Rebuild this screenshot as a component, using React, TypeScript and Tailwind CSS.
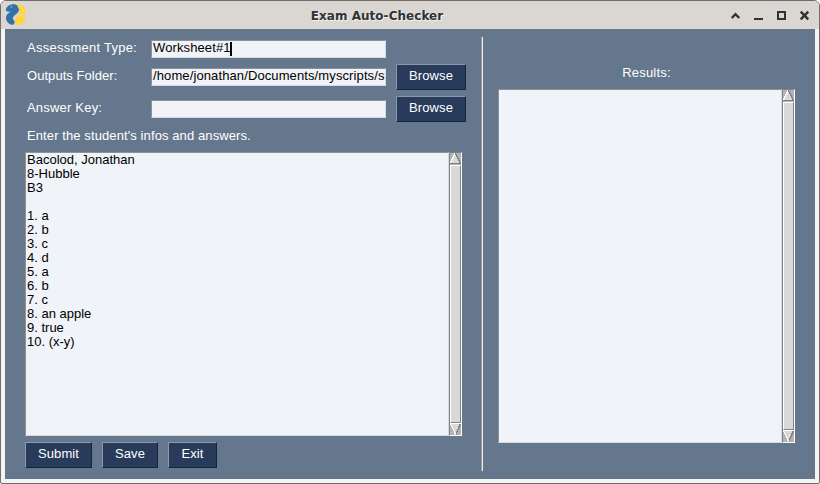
import React from "react";

type WithChildren = { children?: React.ReactNode };

function Label({ children, className = "" }: WithChildren & { className?: string }) {
  return <span className={`block whitespace-pre leading-[15px] text-white ${className}`}>{children}</span>;
}

function Field({ children, className = "" }: WithChildren & { className?: string }) {
  return (
    <div
      className={`flex h-[18px] w-[235px] shrink-0 overflow-hidden whitespace-pre border border-t-[#8f9194] border-l-[#8f9194] border-r-[#d4dbe2] border-b-[#d4dbe2] bg-[#f0f3f7] pl-px leading-[13px] tracking-[0.11px] text-black ${className}`}
    >
      {children}
    </div>
  );
}

function Button({ children, className = "" }: WithChildren & { className?: string }) {
  return (
    <button
      className={`block h-[26px] shrink-0 border border-t-[#8d98ab] border-l-[#8d98ab] border-r-[#17233a] border-b-[#17233a] bg-[#283b5b] pb-[3px] text-center leading-[15px] tracking-[0.1px] text-white ${className}`}
    >
      {children}
    </button>
  );
}

function Arrow({ down = false }: { down?: boolean }) {
  return (
    <svg width="11" height="12" viewBox="0 0 11 12" className="block shrink-0" shapeRendering="crispEdges">
      {down ? (
        <>
          <path d="M0 1H11L5.5 12Z" fill="#d9d9d9" />
          <path d="M10.5 1L5.5 11.5" stroke="#828282" strokeWidth="1.5" />
          <path d="M11 0.5H0M0.5 1L5.5 11.5" stroke="#fff" fill="none" />
        </>
      ) : (
        <>
          <path d="M5.5 0L11 11H0Z" fill="#d9d9d9" />
          <path d="M5.5 0.5L10.5 10.5H0" stroke="#828282" fill="none" />
          <path d="M5 0.5L0.5 10" stroke="#fff" strokeWidth="1.3" fill="none" />
        </>
      )}
    </svg>
  );
}

function ScrollBar() {
  return (
    <div className="flex w-[13px] shrink-0 flex-col border border-t-[#828282] border-l-[#828282] border-r-white border-b-white bg-[#b3b3b3]">
      <Arrow />
      <div className="min-h-0 flex-1 border border-t-white border-l-white border-r-[#828282] border-b-[#828282] bg-[#d9d9d9]" />
      <Arrow down />
    </div>
  );
}

function TextBox({ children, className = "" }: WithChildren & { className?: string }) {
  return (
    <div className={`flex ${className}`}>
      <div className="min-w-0 flex-1 whitespace-pre border border-t-[#8f9194] border-l-[#8f9194] border-r-[#d4dbe2] border-b-[#d4dbe2] bg-[#f0f3f7] pl-px leading-[14px] text-black">
        {children}
      </div>
      <ScrollBar />
    </div>
  );
}

function Logo() {
  return (
    <svg width="22" height="22" viewBox="0 0 22 22" className="shrink-0">
      <path
        d="M6.5 0.6C10 -0.4 14.2 1.6 14.2 5C14.2 9 9.5 10.5 8 13.5C7.3 15.5 9.3 16 9.6 18C9.7 20.5 7 21.5 4.6 20C2 18.4 0.7 16 1 13C1.3 10.3 3.8 9.3 6 7C4.5 7.6 2 8.3 1 6.3C0.4 3.7 3.5 1.4 6.5 0.6Z"
        fill="#3472a6"
      />
      <path
        d="M13.2 0.4C16.8 0.2 20 3 20.7 6C21.2 9 19.6 11.2 17.3 13.2C18.4 14.1 19.6 13.6 20.8 12.8C21.5 16.2 18.4 19.6 15 20.7C11.8 21.6 9.6 20 9.9 17C10.4 13 14.4 11.6 15.2 8.6C15.7 6.5 13.9 5.4 13 3.5C12.5 2 12.5 1 13.2 0.4Z"
        fill="#ffd43b"
      />
      <path d="M15.5 2C18 4 18.8 6.5 17.8 9C16.6 11.6 14 13 12.8 16" stroke="#ffe36b" fill="none" />
      <circle cx="6.5" cy="2.9" r="0.7" fill="#b8d4e8" />
      <circle cx="14" cy="18.4" r="0.6" fill="#fff3b0" />
    </svg>
  );
}

function TitleBar() {
  return (
    <header className="flex h-7 shrink-0 items-start bg-[#dad6d2] pl-[4px] pt-[3px]">
      <Logo />
      <h1 className="w-[698px] pl-[2px] pt-1 text-center font-['DejaVu_Sans'] text-[12px] font-bold leading-4 tracking-[0.04px] text-[#2e3436] [text-shadow:1px_1px_0_#f4f2f0]">
        Exam Auto-Checker
      </h1>
      <svg width="85" height="20" viewBox="0 0 85 20" className="ml-[3px] shrink-0" fill="none" stroke="#2e3436" strokeWidth="2">
        <path d="M3.7 14L7.5 10.2L11.3 14" strokeWidth="2.4" />
        <path d="M26 15H35" />
        <path d="M50 8H57V15H50Z" />
        <path d="M72.7 7.7L80.3 15.3M80.3 7.7L72.7 15.3" strokeWidth="2.4" />
      </svg>
    </header>
  );
}

const ANSWERS = `Bacolod, Jonathan
8-Hubble
B3

1. a
2. b
3. c
4. d
5. a
6. b
7. c
8. an apple
9. true
10. (x-y)`;

export default function App() {
  return (
    <div className="h-[484px] w-[820px] bg-white font-['Liberation_Sans',sans-serif] text-[13px]">
      <div className="flex h-[484px] flex-col overflow-hidden rounded-t-[6px] rounded-b-[2px] border border-[#716d6b] bg-[#f6f4f2]">
        <TitleBar />
        <main className="mx-1 flex h-[450px] shrink-0 bg-[#64778d] pl-5 pt-2">
          <section className="w-[441px] shrink-0">
            <div className="flex h-[27px] items-start">
              <Label className="w-[126px] pl-[2px] pt-[3px] tracking-[0.25px]">Assessment Type:</Label>
              <Field className="mt-[3px]">
                Worksheet#1
                <span className="mt-px -ml-px h-[14px] w-[2px] shrink-0 bg-black" />
              </Field>
            </div>
            <div className="flex h-8 items-start">
              <Label className="w-[126px] pl-[2px] pt-1 tracking-[0.05px]">Outputs Folder:</Label>
              <Field className="mt-1">/home/jonathan/Documents/myscripts/s</Field>
              <Button className="ml-[10px] w-[70px]">Browse</Button>
            </div>
            <div className="flex h-8 items-start">
              <Label className="w-[126px] pl-[2px] pt-1 tracking-[0.2px]">Answer Key:</Label>
              <Field className="mt-1" />
              <Button className="ml-[10px] w-[70px]">Browse</Button>
            </div>
            <Label className="h-6 pl-[2px] tracking-[0.1px]">Enter the student's infos and answers.</Label>
            <TextBox className="h-[284px] w-[437px]">{ANSWERS}</TextBox>
            <div className="mt-1.5 flex gap-2.5">
              <Button className="w-[67px]">Submit</Button>
              <Button className="w-14">Save</Button>
              <Button className="w-[49px]">Exit</Button>
            </div>
          </section>
          <div className="ml-[15px] h-[434px] w-[2px] shrink-0 border-l border-r border-l-[#9a9a9a] border-r-[#f0ebe7]" />
          <section className="ml-[15px] w-[297px]">
            <Label className="h-[52px] pt-[28px] text-center tracking-[0.2px]">Results:</Label>
            <TextBox className="h-[354px]" />
          </section>
        </main>
      </div>
    </div>
  );
}
